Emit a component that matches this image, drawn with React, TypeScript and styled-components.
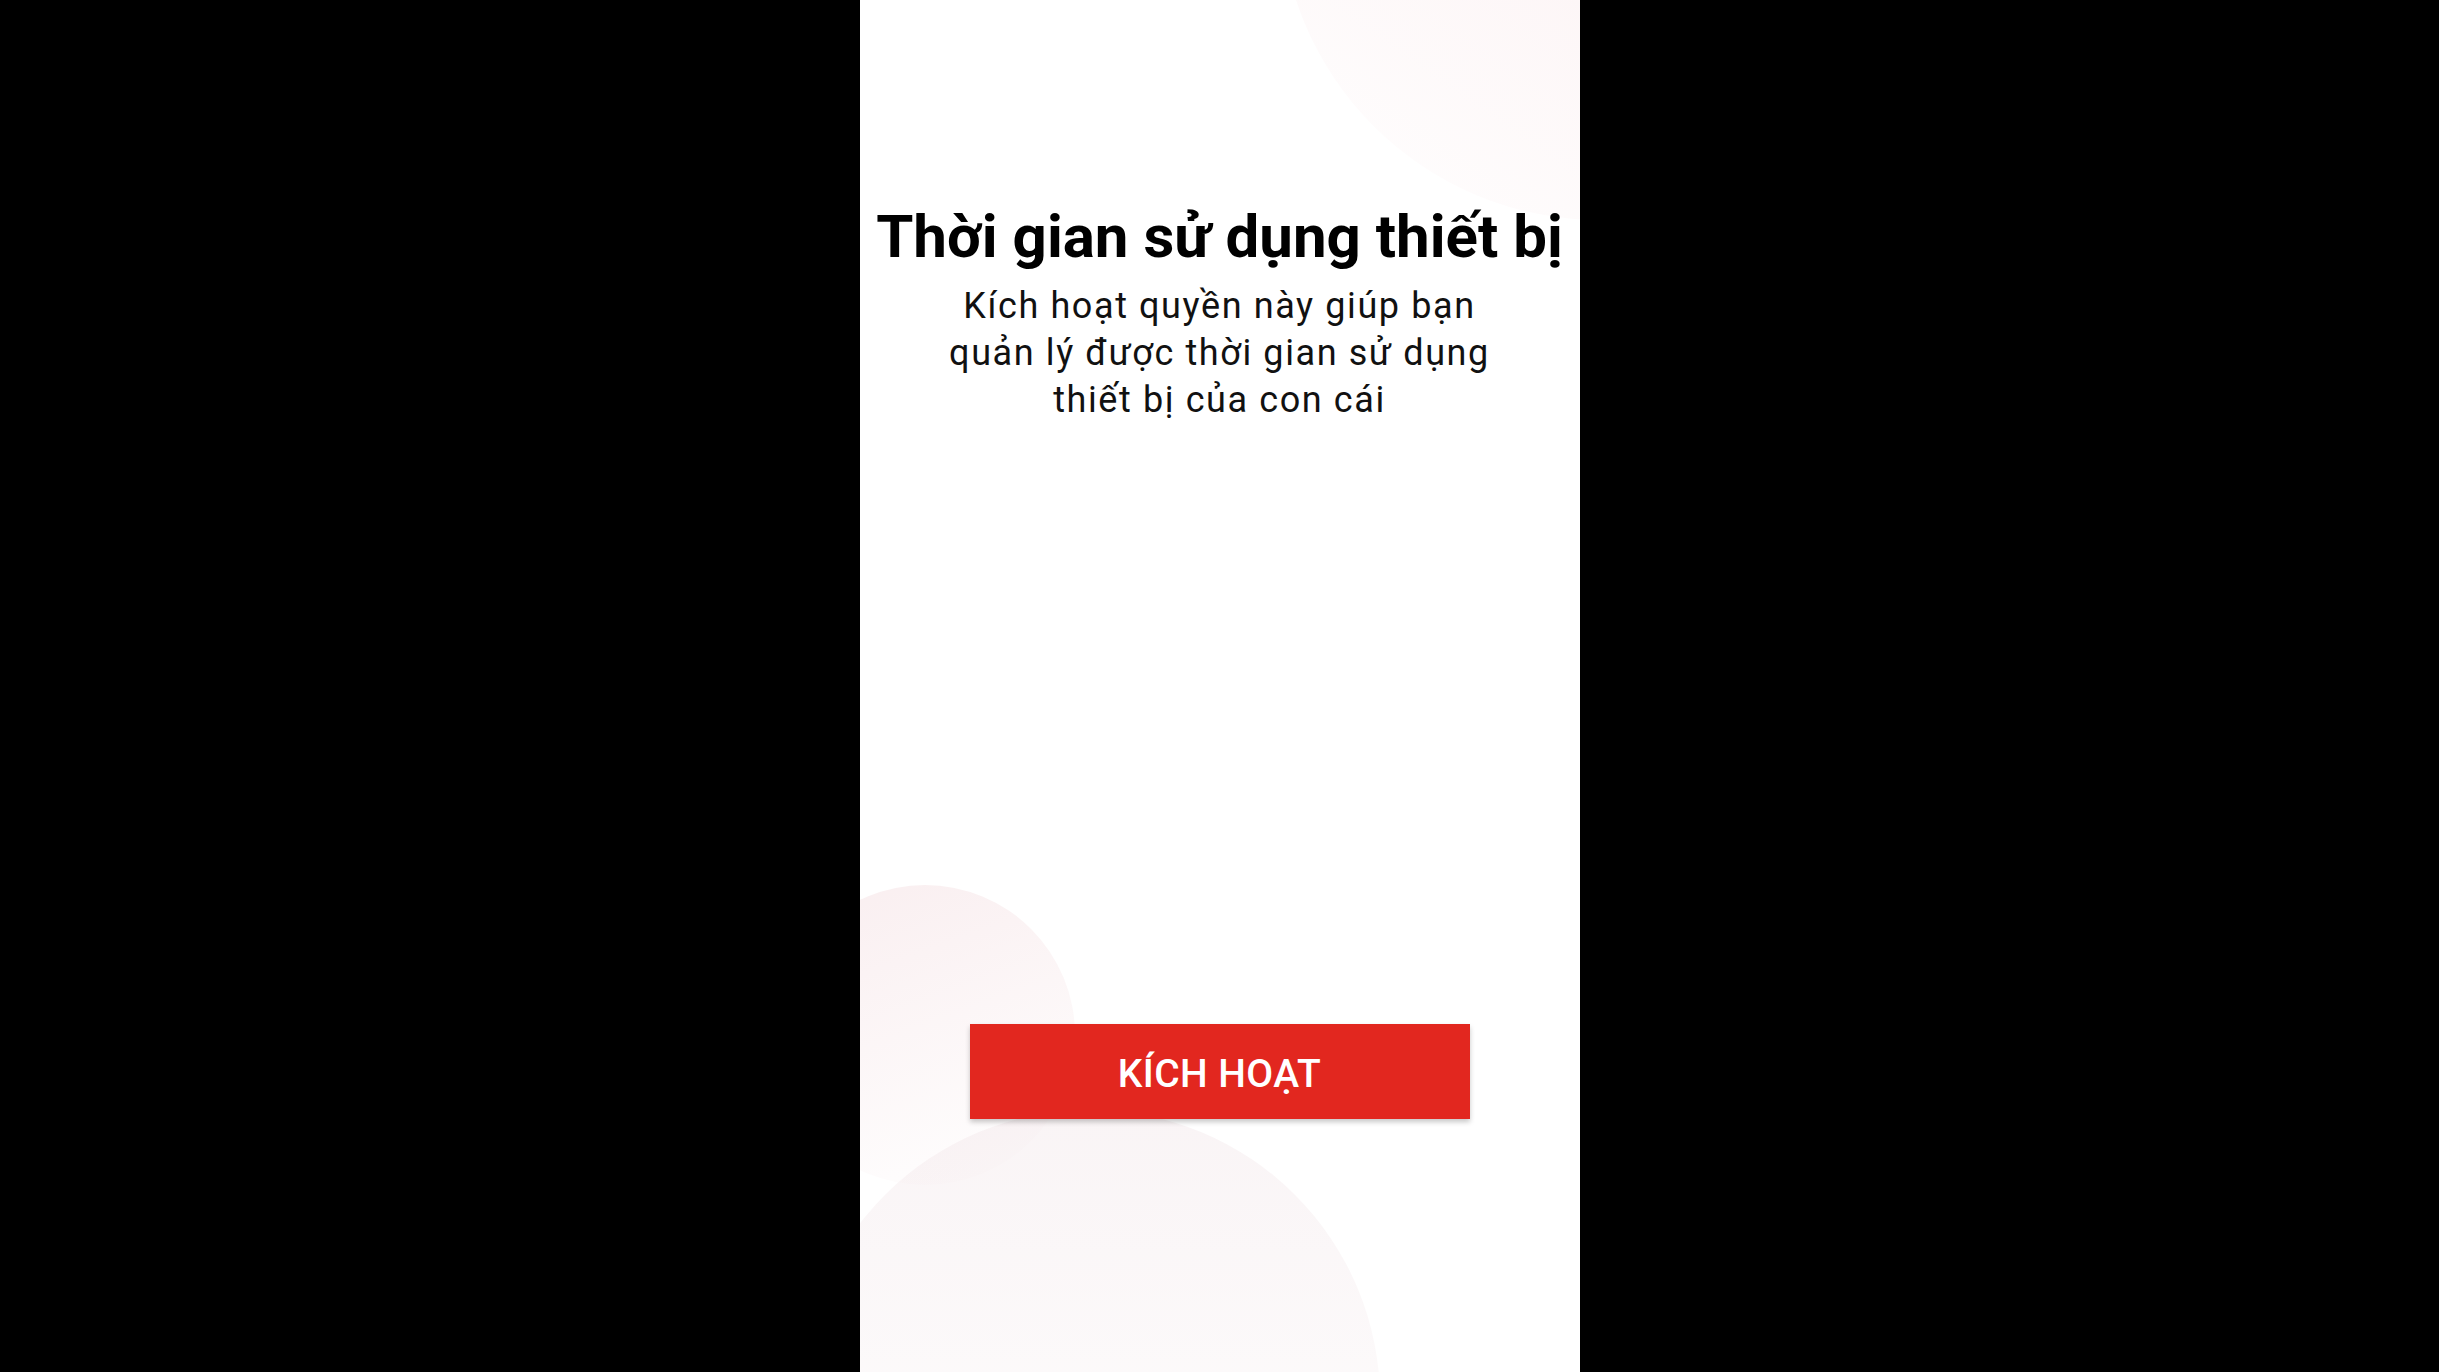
import React from 'react';
import styled, { createGlobalStyle } from 'styled-components';

const GlobalStyle = createGlobalStyle`
  html, body {
    margin: 0;
    padding: 0;
    background: #000;
    height: 100%;
  }
  body {
    font-family: Roboto, "Noto Sans", "Liberation Sans", sans-serif;
  }
  #root {
    height: 100%;
  }
`;

const Stage = styled.div`
  display: flex;
  justify-content: center;
  height: 1372px;
  background: #000;
`;

const Screen = styled.div`
  position: relative;
  width: 720px;
  height: 100%;
  background: #fff;
  overflow: hidden;
  display: flex;
  flex-direction: column;
  align-items: center;
`;

interface BlobProps {
  size: number
  top: number
  left: number
  angle: number
  tint: string
}

// faint decorative circles behind the content
const Blob = styled.div<BlobProps>`
  position: absolute;
  width: ${(p) => p.size}px;
  height: ${(p) => p.size}px;
  top: ${(p) => p.top}px;
  left: ${(p) => p.left}px;
  border-radius: 50%;
  background: linear-gradient(${(p) => p.angle}deg, ${(p) => p.tint} 0%, rgba(255, 255, 255, 0) 100%);
  pointer-events: none;
`;

const Content = styled.div`
  position: relative;
  z-index: 1;
  display: flex;
  flex-direction: column;
  align-items: center;
  flex: 1;
  width: 100%;
  padding-top: 200px;
  padding-bottom: 253px;
  box-sizing: border-box;
`;

const Title = styled.h1`
  margin: 0;
  font-size: 60px;
  line-height: 73px;
  font-weight: 700;
  color: #000;
  text-align: center;
  white-space: nowrap;
`;

const Subtitle = styled.p`
  margin: 10px 0 0;
  max-width: 580px;
  font-size: 36px;
  line-height: 47px;
  letter-spacing: 1.6px;
  font-weight: 400;
  color: #111;
  text-align: center;
`;

const Spacer = styled.div`
  flex: 1;
`;

const ActivateBtn = styled.button`
  width: 500px;
  height: 95px;
  padding: 5px 0 0;
  border: none;
  border-radius: 0;
  background: #e2271f;
  color: #fff;
  font-family: Roboto, "Noto Sans", sans-serif;
  font-size: 39px;
  font-weight: 500;
  letter-spacing: 0.4px;
  box-shadow: 0 3px 5px rgba(0, 0, 0, 0.22);
  cursor: pointer;
  display: flex;
  align-items: center;
  justify-content: center;
`;

const App: React.FC = () => {
  return (
    <>
      <GlobalStyle />
      <Stage>
        <Screen>
          <Blob size={640} top={-420} left={420} angle={215} tint='rgba(244, 206, 210, 0.45)' />
          <Blob size={300} top={885} left={-85} angle={160} tint='rgba(240, 210, 214, 0.38)' />
          <Blob size={580} top={1110} left={-60} angle={180} tint='rgba(238, 222, 226, 0.32)' />

          <Content>
            <Title>Thời gian sử dụng thiết bị</Title>
            <Subtitle>Kích hoạt quyền này giúp bạn quản lý được thời gian sử dụng thiết bị của con cái</Subtitle>
            <Spacer />
            <ActivateBtn>KÍCH HOẠT</ActivateBtn>
          </Content>
        </Screen>
      </Stage>
    </>
  );
};

export default App;
